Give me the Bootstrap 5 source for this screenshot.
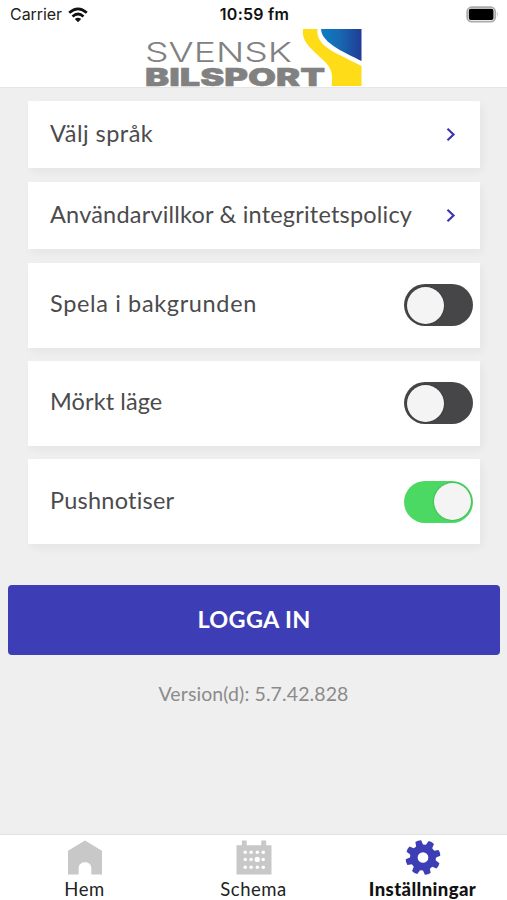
<!DOCTYPE html>
<html lang="sv">
<head>
<meta charset="utf-8">
<meta name="viewport" content="width=device-width, initial-scale=1">
<title>Inställningar</title>
<link rel="stylesheet" href="https://cdn.jsdelivr.net/npm/bootstrap@5.3.0/dist/css/bootstrap.min.css">
<style>
  body { background: #efefef; font-family: Lato, sans-serif; color: #4b4b4d; }
  .app-header { height: 87.500px; border-bottom: 1px solid #e6e6e6; }
  .status-bar { height: 29px; padding: 0 8px 0 10px; font: 500 16px/29px Inter, sans-serif; color: #222; }
  .status-side { flex: 1 1 0; }
  .status-carrier { font-size: 16px; font-weight: 400; letter-spacing: -.05px; }
  .status-time { font-size: 16px; font-weight: 600; color: #111; letter-spacing: .25px; }
  .wifi { margin-left: 6px; }
  .brand-logo { margin-left: 145px; overflow: visible; }
  .settings-list { padding: 13.500px 27px 0 28px; gap: 13.4px; }
  .setting { height: 67.4px; padding: 0 7px 0 22px; border: 0; border-radius: 0; background: #fff; color: #4b4b4d; font-size: 23.500px; box-shadow: 3px 4px 8px rgba(0,0,0,.045); }
  .setting > span { margin-top: -2px; }
  .setting-tall { height: 85px; }
  .setting-tall > span { margin-top: -3px; }
  .setting .chev { margin-right: 17px; }
  .toggle { width: 69px; height: 42px; margin: 0; border-radius: 21px; background: #464648; padding: 2.500px; }
  .toggle-knob { width: 37px; height: 37px; border-radius: 50%; background: #f4f4f4; box-shadow: 0 0 2px rgba(0,0,0,.35); }
  .toggle.is-on { background: #4bd964; }
  .btn-login { height: 70px; margin: 40.500px 7px 0 8px; padding: 5px 0; border-radius: 4px; background: #3d3db5; color: #fff; font-size: 23.500px; font-weight: 700; letter-spacing: .3px; }
  .btn-login:hover { background: #3434a4; color: #fff; }
  .version { margin-top: 25px; font-size: 19.500px; line-height: 28px; color: #8b8b8b; letter-spacing: .1px; }
  .tab-bar { height: 66px; border-top: 1px solid #e2e2e2; padding-top: 5px; }
  .tab-item { flex: 1 1 0; color: #222; font-size: 18.500px; line-height: 22px; letter-spacing: .5px; }
  .tab-item svg { margin-bottom: 3px; }
  .tab-item.is-current { color: #111; font-weight: 900; letter-spacing: .4px; }
  .t1 { letter-spacing: .46px; } .t2 { letter-spacing: .2px; } .t3 { letter-spacing: .64px; }
  .t4 { letter-spacing: .1px; } .t5 { letter-spacing: .23px; }
</style>
</head>
<body class="d-flex flex-column vh-100 overflow-hidden">
<header class="app-header bg-white flex-shrink-0">
  <div class="status-bar d-flex align-items-center">
    <div class="status-side d-flex align-items-center">
      <span class="status-carrier">Carrier</span>
      <svg class="wifi" width="20" height="16" viewBox="0 0 20 16" fill="none" stroke="#111" stroke-width="2.7"><path d="M1.2 5.7Q10-2.1 18.8 5.7M4.5 9.4Q10 4.6 15.5 9.4"/><path d="M10 15.2 6.8 12Q10 9.5 13.2 12Z" fill="#111" stroke="none"/></svg>
    </div>
    <span class="status-time">10:59 fm</span>
    <div class="status-side d-flex justify-content-end">
      <svg width="33" height="17" viewBox="0 0 33 17"><rect x="1.200" y="1.200" width="28" height="14.500" rx="4.500" fill="#fff" stroke="#aaa" stroke-width="1.800"/><rect x="2.8" y="2.8" width="24.7" height="11.2" rx="2" fill="#000"/><path d="M31 6q1.5 2.4 0 5z" fill="#999"/></svg>
    </div>
  </div>
  <svg class="brand-logo d-block" width="217" height="58" viewBox="145 29 217 58" role="img" aria-label="Svensk Bilsport">
    <defs><linearGradient id="sky"><stop offset="0" stop-color="#087fc5"/><stop offset=".45" stop-color="#1769b0"/><stop offset="1" stop-color="#213c98"/></linearGradient></defs>
    <text x="145" y="61.5" font-family="Inter, sans-serif" font-size="27" font-weight="300" fill="#818181" textLength="147" lengthAdjust="spacingAndGlyphs">SVENSK</text>
    <text x="145" y="85.7" font-family="Inter, sans-serif" font-size="24.500" font-weight="900" fill="#818181" stroke="#818181" stroke-width=".5" textLength="180" lengthAdjust="spacingAndGlyphs">BILSPORT</text>
    <path d="M303 29h14.500c-1.500 12 9 19 19 24.500L361.500 66v20H331.500c2.500-15-2-20-10-27.500C313 50 301 42 303 29Z" fill="#ffdc18"/>
    <path d="M321 29h40.500v32c-13-7-40-17-40.500-32Z" fill="url(#sky)"/>
  </svg>
</header>

<main class="flex-grow-1">
  <div class="settings-list d-flex flex-column">
    <a href="#" class="setting d-flex align-items-center justify-content-between text-decoration-none"><span class="t1">Välj språk</span>
      <svg class="chev" width="11" height="15" viewBox="0 0 11 15" fill="none" stroke="#3d35b0" stroke-width="2.2"><path d="M2.500 1.800 8.500 7.500 2.500 13.200"/></svg></a>
    <a href="#" class="setting d-flex align-items-center justify-content-between text-decoration-none"><span class="t2">Användarvillkor &amp; integritetspolicy</span>
      <svg class="chev" width="11" height="15" viewBox="0 0 11 15" fill="none" stroke="#3d35b0" stroke-width="2.2"><path d="M2.500 1.800 8.500 7.500 2.500 13.200"/></svg></a>
    <div class="setting setting-tall d-flex align-items-center justify-content-between"><span class="t3">Spela i bakgrunden</span>
      <div class="toggle d-flex align-items-center" role="switch" aria-checked="false"><span class="toggle-knob"></span></div></div>
    <div class="setting setting-tall d-flex align-items-center justify-content-between"><span class="t4">Mörkt läge</span>
      <div class="toggle d-flex align-items-center" role="switch" aria-checked="false"><span class="toggle-knob"></span></div></div>
    <div class="setting setting-tall d-flex align-items-center justify-content-between"><span class="t5">Pushnotiser</span>
      <div class="toggle is-on d-flex align-items-center justify-content-end" role="switch" aria-checked="true"><span class="toggle-knob"></span></div></div>
  </div>
  <div class="d-grid"><button type="button" class="btn btn-login">LOGGA IN</button></div>
  <div class="version text-center">Version(d): 5.7.42.828</div>
</main>

<nav class="tab-bar bg-white d-flex flex-shrink-0">
  <a href="#" class="tab-item d-flex flex-column align-items-center text-decoration-none">
    <svg width="36" height="36" viewBox="0 0 36 36"><path d="M.5 11 18 .5l17.500 10.500v24.500H24.500V29c0-8-13-8-13 0v6.500H.5Z" fill="#c8c8c8"/></svg>
    <span>Hem</span></a>
  <a href="#" class="tab-item d-flex flex-column align-items-center text-decoration-none">
    <svg width="38" height="36" viewBox="0 0 38 36"><path d="M1 5.500h5.500V.5h5v5h15v-5h5v5H37v30H1Z" fill="#c8c8c8"/><g fill="#fff"><circle cx="10" cy="12.500" r="1.800"/><circle cx="16" cy="12.500" r="1.800"/><circle cx="22.500" cy="12.500" r="1.800"/><circle cx="28.500" cy="12.500" r="1.800"/><circle cx="10" cy="20" r="1.800"/><circle cx="16" cy="20" r="1.800"/><circle cx="22.300" cy="20" r="2.700"/><circle cx="28.500" cy="20" r="1.800"/><circle cx="10" cy="28" r="1.800"/><circle cx="16" cy="28" r="1.800"/><circle cx="22.500" cy="28" r="1.800"/><circle cx="28.500" cy="28" r="1.800"/></g></svg>
    <span>Schema</span></a>
  <a href="#" class="tab-item is-current d-flex flex-column align-items-center text-decoration-none">
    <svg width="36" height="36" viewBox="-18 -18 36 36" fill="#3d3db5"><defs><path id="tooth" d="M-3.900-11 -3.100-17.600Q0-18.600 3.100-17.600L3.900-11Z"/></defs><circle r="9.400" fill="none" stroke="#3d3db5" stroke-width="7.800"/><g transform="rotate(-16)"><use href="#tooth"/><use href="#tooth" transform="rotate(45)"/><use href="#tooth" transform="rotate(90)"/><use href="#tooth" transform="rotate(135)"/><use href="#tooth" transform="rotate(180)"/><use href="#tooth" transform="rotate(225)"/><use href="#tooth" transform="rotate(270)"/><use href="#tooth" transform="rotate(315)"/></g></svg>
    <span>Inställningar</span></a>
</nav>
<script src="https://cdn.jsdelivr.net/npm/bootstrap@5.3.0/dist/js/bootstrap.bundle.min.js"></script>
</body>
</html>
